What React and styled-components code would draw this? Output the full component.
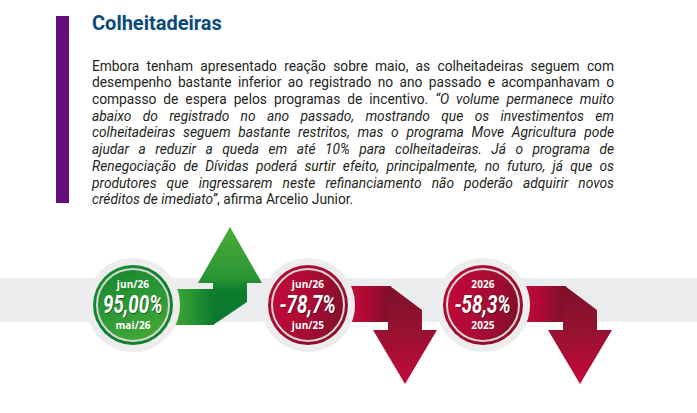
import React from "react";
import styled, { createGlobalStyle } from "styled-components";

const Global = createGlobalStyle`
  html, body { margin: 0; padding: 0; background: #ffffff; }
  body { width: 697px; height: 413px; overflow: hidden; font-family: Roboto, "Liberation Sans", sans-serif; }
`;

const Page = styled.div`
  width: 697px;
  height: 413px;
  display: flex;
  flex-direction: column;
`;

const Header = styled.section`
  height: 220px;
  box-sizing: border-box;
  display: flex;
  align-items: flex-start;
  gap: 23px;
  padding: 16px 0 0 56px;
`;

const Bar = styled.div`
  width: 13px;
  height: 187px;
  flex-shrink: 0;
  background: #650f7e;
`;

const Content = styled.div`
  width: 522px;
  margin-top: -4px;
`;

const Title = styled.h2`
  margin: 0;
  font-family: Roboto, "Liberation Sans", sans-serif;
  font-weight: 700;
  font-size: 20px;
  line-height: 22px;
  color: #0b4a7b;
`;

const Body = styled.div`
  margin-top: 23.6px;
  font-family: Roboto, "Liberation Sans", sans-serif;
  font-size: 13.75px;
  line-height: 16.7px;
  color: #231f20;
`;

const Line = styled.span`
  display: block;
  text-align: justify;
  text-align-last: ${(p) => (p.$last ? "left" : "justify")};
`;

const Quote = styled.em`
  font-style: italic;
`;

const Infographic = styled.section`
  height: 193px;
  background: linear-gradient(
    to bottom,
    transparent 0,
    transparent 58px,
    #ebecee 58px,
    #ebecee 102px,
    transparent 102px
  );
`;

const Row = styled.div`
  display: flex;
  padding-left: 86px;
`;

const Stat = styled.div`
  width: 175px;
  flex-shrink: 0;
  display: flex;
  align-items: flex-start;
`;

const Halo = styled.div`
  width: 94px;
  height: 94px;
  margin-top: 38px;
  flex-shrink: 0;
  box-sizing: border-box;
  padding: 7px;
  border-radius: 50%;
  background: radial-gradient(circle at 50% 50%, #f1f1f1 0, #ececec 78%, #dedede 100%);
  z-index: 2;
`;

const Ring = styled.div`
  width: 80px;
  height: 80px;
  box-sizing: border-box;
  padding: 3px;
  border-radius: 50%;
  background: ${(p) =>
    p.$tone === "up"
      ? "linear-gradient(135deg, #1a9134 0%, #0c7d2d 55%, #16852f 100%)"
      : "linear-gradient(135deg, #b80a37 0%, #a10a30 55%, #8a0f2b 100%)"};
`;

const Disk = styled.div`
  width: 74px;
  height: 74px;
  box-sizing: border-box;
  border: 2px solid #d4d6d5;
  border-radius: 50%;
  display: flex;
  flex-direction: column;
  align-items: center;
  justify-content: center;
  gap: 4px;
  color: #ffffff;
  background: ${(p) =>
    p.$tone === "up"
      ? "linear-gradient(160deg, #17872f 0%, #2c9935 50%, #4aa938 100%)"
      : "linear-gradient(100deg, #c60839 0%, #a60c33 55%, #7e0f29 100%)"};
`;

const Label = styled.span`
  font-family: "Open Sans", "Noto Sans", sans-serif;
  font-weight: 700;
  font-size: 10px;
  line-height: 11px;
  letter-spacing: 0.1px;
`;

const Value = styled.span`
  font-family: Roboto, "Liberation Sans", sans-serif;
  font-weight: 700;
  font-style: italic;
  font-size: 25px;
  line-height: 22px;
  height: 22px;
  display: inline-block;
  transform: scaleX(0.75);
  white-space: nowrap;
  text-shadow: 1px 1px 0 rgba(0, 0, 0, 0.45);
`;

const ArrowSvg = styled.svg`
  flex-shrink: 0;
  z-index: 1;
  margin-left: ${(p) => (p.$tone === "up" ? "-15px" : "-10px")};
  margin-top: ${(p) => (p.$tone === "up" ? "7px" : "66px")};
  overflow: visible;
`;

function UpArrow({ id }) {
  return (
    <ArrowSvg $tone="up" width="100" height="100" viewBox="0 0 100 100">
      <defs>
        <linearGradient id={`${id}-band`} x1="0" y1="0" x2="1" y2="0">
          <stop offset="0" stopColor="#3fa637" />
          <stop offset="0.35" stopColor="#35a036" />
          <stop offset="1" stopColor="#0c7a2d" />
        </linearGradient>
        <linearGradient id={`${id}-shaft`} x1="0" y1="1" x2="0" y2="0">
          <stop offset="0" stopColor="#0a772c" />
          <stop offset="0.35" stopColor="#0f7d2e" />
          <stop offset="0.5" stopColor="#2c9634" />
          <stop offset="1" stopColor="#4aab39" />
        </linearGradient>
      </defs>
      <rect x="0" y="62" width="49" height="36" fill={`url(#${id}-band)`} />
      <polygon
        points="48,62 48,56 33,56 65,0 97,56 82,56 82,75 48,98"
        fill={`url(#${id}-shaft)`}
      />
    </ArrowSvg>
  );
}

function DownArrow({ id }) {
  return (
    <ArrowSvg $tone="down" width="100" height="100" viewBox="0 0 100 100">
      <defs>
        <linearGradient id={`${id}-band`} x1="0" y1="0" x2="1" y2="0">
          <stop offset="0" stopColor="#bf0a38" />
          <stop offset="0.4" stopColor="#b40a35" />
          <stop offset="1" stopColor="#7b1029" />
        </linearGradient>
        <linearGradient id={`${id}-shaft`} x1="0" y1="0" x2="0" y2="1">
          <stop offset="0" stopColor="#7e1029" />
          <stop offset="0.45" stopColor="#951230" />
          <stop offset="1" stopColor="#c7083a" />
        </linearGradient>
      </defs>
      <rect x="0" y="0" width="46" height="36" fill={`url(#${id}-band)`} />
      <polygon
        points="45,0 77,24 77,44 92,44 60,98 28,44 43,44 43,0"
        fill={`url(#${id}-shaft)`}
      />
    </ArrowSvg>
  );
}

const stats = [
  { tone: "up", top: "jun/26", value: "95,00%", bottom: "mai/26" },
  { tone: "down", top: "jun/26", value: "-78,7%", bottom: "jun/25" },
  { tone: "down", top: "2026", value: "-58,3%", bottom: "2025" },
];

export default function App() {
  return (
    <Page>
      <Global />
      <Header>
        <Bar />
        <Content>
          <Title>Colheitadeiras</Title>
          <Body>
            <Line>Embora tenham apresentado reação sobre maio, as colheitadeiras seguem com</Line>
            <Line>desempenho bastante inferior ao registrado no ano passado e acompanhavam o</Line>
            <Line>
              compasso de espera pelos programas de incentivo. <Quote>“O volume permanece muito</Quote>
            </Line>
            <Line>
              <Quote>abaixo do registrado no ano passado, mostrando que os investimentos em</Quote>
            </Line>
            <Line>
              <Quote>colheitadeiras seguem bastante restritos, mas o programa Move Agricultura pode</Quote>
            </Line>
            <Line>
              <Quote>ajudar a reduzir a queda em até 10% para colheitadeiras. Já o programa de</Quote>
            </Line>
            <Line>
              <Quote>Renegociação de Dívidas poderá surtir efeito, principalmente, no futuro, já que os</Quote>
            </Line>
            <Line>
              <Quote>produtores que ingressarem neste refinanciamento não poderão adquirir novos</Quote>
            </Line>
            <Line $last>
              <Quote>créditos de imediato”</Quote>, afirma Arcelio Junior.
            </Line>
          </Body>
        </Content>
      </Header>
      <Infographic>
        <Row>
          {stats.map((s, i) => (
            <Stat key={i}>
              <Halo>
                <Ring $tone={s.tone}>
                  <Disk $tone={s.tone}>
                    <Label>{s.top}</Label>
                    <Value>{s.value}</Value>
                    <Label>{s.bottom}</Label>
                  </Disk>
                </Ring>
              </Halo>
              {s.tone === "up" ? <UpArrow id={`a${i}`} /> : <DownArrow id={`a${i}`} />}
            </Stat>
          ))}
        </Row>
      </Infographic>
    </Page>
  );
}
